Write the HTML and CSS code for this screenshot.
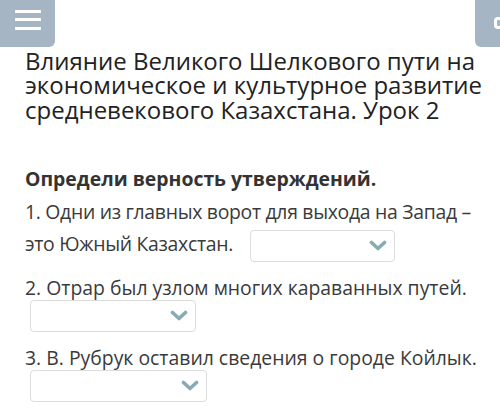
FILE: index.html
```html
<!DOCTYPE html>
<html lang="ru">
<head>
<meta charset="utf-8">
<link rel="stylesheet" href="styles.css">
</head>
<body>
<div class="topbar">
  <div class="menu-btn">
    <span class="bar"></span><span class="bar"></span><span class="bar"></span>
  </div>
  <div class="side-btn"><span class="side-glyph"></span></div>
</div>
<main class="content">
  <h1 class="title">Влияние Великого Шелкового пути на экономическое и культурное развитие средневекового Казахстана. Урок 2</h1>
  <h2 class="task">Определи верность утверждений.</h2>
  <p class="stmt first">1. Одни из главных ворот для выхода на Запад – это Южный Казахстан. <span class="select w1"><svg class="chev" viewBox="0 0 18 11" width="18" height="11"><path d="M2.5 2.5 L9 8.5 L15.5 2.5" fill="none" stroke="#88abb3" stroke-width="3.6" stroke-linecap="round" stroke-linejoin="round"/></svg></span></p>
  <p class="stmt">2. Отрар был узлом многих караванных путей.</p>
  <div class="sel-row"><span class="select w2"><svg class="chev" viewBox="0 0 18 11" width="18" height="11"><path d="M2.5 2.5 L9 8.5 L15.5 2.5" fill="none" stroke="#88abb3" stroke-width="3.6" stroke-linecap="round" stroke-linejoin="round"/></svg></span></div>
  <p class="stmt">3. В. Рубрук оставил сведения о городе Койлык.</p>
  <div class="sel-row"><span class="select w3"><svg class="chev" viewBox="0 0 18 11" width="18" height="11"><path d="M2.5 2.5 L9 8.5 L15.5 2.5" fill="none" stroke="#88abb3" stroke-width="3.6" stroke-linecap="round" stroke-linejoin="round"/></svg></span></div>
</main>
</body>
</html>
```
FILE: styles.css
```css
html, body {
  margin: 0;
  padding: 0;
  background: #ffffff;
}
body {
  font-family: "Open Sans", "Noto Sans", sans-serif;
  color: #333333;
  width: 500px;
  height: 413px;
  overflow: hidden;
}
.topbar {
  display: flex;
  justify-content: space-between;
  height: 47px;
}
.menu-btn {
  width: 55px;
  height: 47px;
  background: #a5b5c3;
  border-bottom-right-radius: 6px;
  display: flex;
  flex-direction: column;
  justify-content: center;
  align-items: center;
  gap: 5.5px;
  box-sizing: border-box;
  padding-bottom: 8px;
}
.bar {
  display: block;
  width: 26px;
  height: 3px;
  background: #ffffff;
}
.side-btn {
  width: 25px;
  height: 47px;
  background: #a5b5c3;
  border-bottom-left-radius: 6px;
  display: flex;
  justify-content: flex-end;
  padding-top: 17px;
  box-sizing: border-box;
}
.side-glyph {
  display: block;
  width: 6px;
  height: 12px;
  border: 3px solid #ffffff;
  border-right: none;
  border-radius: 4px 0 0 4px;
  box-sizing: border-box;
}
.content {
  padding: 0 15px 0 25px;
}
.title {
  margin: 2px 0 0 0;
  font-weight: 400;
  font-size: 24px;
  line-height: 24.3px;
  color: #222222;
}
.task {
  margin: 45px 0 0 0;
  font-weight: 700;
  font-size: 19.4px;
  line-height: 24px;
  color: #333333;
}
.stmt {
  margin: 10px 0 0 0;
  font-size: 19.4px;
  line-height: 32px;
  color: #3a3a3a;
}
.stmt.first {
  margin-top: 5px;
  letter-spacing: -0.3px;
}
.select {
  display: inline-flex;
  vertical-align: middle;
  align-items: center;
  justify-content: flex-end;
  height: 32px;
  box-sizing: border-box;
  border: 1px solid #dcdcdc;
  border-radius: 4px;
  padding-right: 7px;
  background: #ffffff;
}
.w1 { width: 145px; margin-left: 12px; }
.w2 { width: 166px; }
.w3 { width: 177px; }
.sel-row {
  padding-left: 5px;
  height: 32px;
  margin-top: -4px;
}
```
